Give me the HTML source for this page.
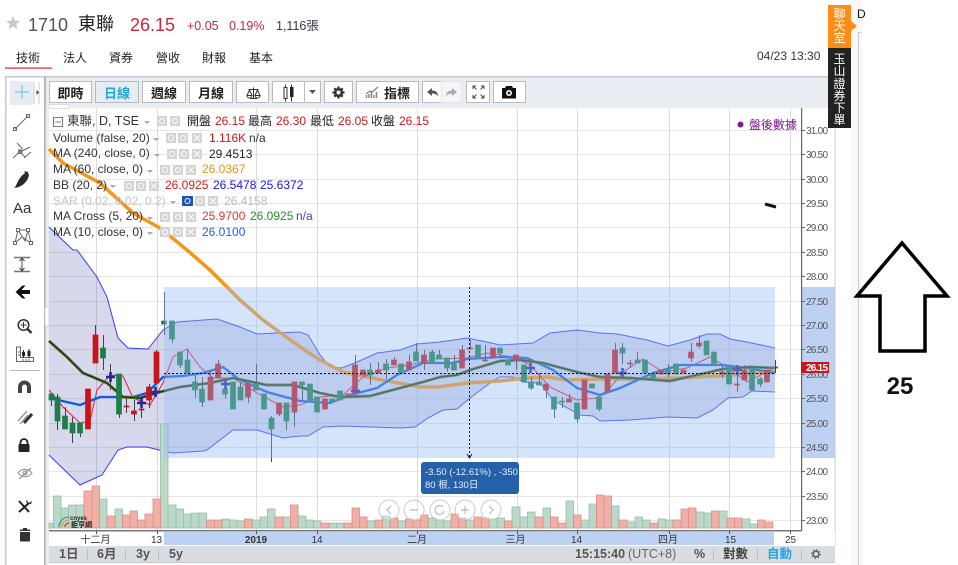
<!DOCTYPE html>
<html><head><meta charset="utf-8"><style>
html,body{margin:0;padding:0;background:#fff;width:958px;height:565px;overflow:hidden}
svg{display:block;font-family:"Liberation Sans","Noto Sans CJK TC",sans-serif}
.b{font-weight:700;font-size:13px;fill:#222;text-anchor:middle}
.tb{fill:#fff;stroke:#b8bcc0;stroke-width:1}
.ax{font-size:10px;fill:#555}
.lg{font-size:12px;fill:#333}
.d{font-size:10px;fill:#333;text-anchor:middle}
.sq{fill:#d4d4d4}
</style></head><body>
<svg width="958" height="565" viewBox="0 0 958 565">
<rect width="958" height="565" fill="#fff"/>
<!-- header -->
<path d="M13 16l2 4.600 5 .4-3.800 3.300 1.200 4.900-4.400-2.700-4.400 2.700 1.200-4.900L6 21l5-.4z" fill="#c9c9c9"/>
<text x="28" y="31" font-size="18" fill="#4a5260">1710</text>
<text x="78" y="30" font-size="18" fill="#222">東聯</text>
<text x="130" y="31" font-size="18" fill="#c8283c">26.15</text>
<text x="187" y="30" font-size="12.500" fill="#c8283c">+0.05</text>
<text x="229" y="30" font-size="12.500" fill="#c8283c">0.19%</text>
<text x="276" y="30" font-size="12.500" fill="#333a4a">1,116張</text>
<g font-size="12" fill="#222">
<text x="16" y="62">技術</text><text x="63" y="62">法人</text><text x="109" y="62">資券</text><text x="156" y="62">營收</text><text x="202" y="62">財報</text><text x="249" y="62">基本</text></g>
<rect x="5" y="67.500" width="47" height="1.200" fill="#d8202c"/>
<text x="757" y="60" font-size="12" fill="#334">04/23 13:30</text>

<!-- toolbar -->
<rect x="5" y="76" width="830" height="32" fill="#e9ecf0"/>
<rect x="5" y="76" width="830" height="1.500" fill="#c6cad0"/>
<rect x="5" y="76" width="1.500" height="489" fill="#c6cad0"/>
<rect x="6.500" y="77" width="38" height="488" fill="#fff"/>
<rect x="44" y="76" width="1.800" height="489" fill="#aeb3b8"/>
<rect x="45.800" y="108" width="3.200" height="457" fill="#e9ecf0"/>
<rect x="6.500" y="76" width="38" height="1.500" fill="#c6cad0"/>
<rect x="10" y="81" width="23" height="24" fill="#e6ecf2"/>
<path d="M22 85v14M15 92h14" stroke="#8ccbe8" stroke-width="1.500"/><path d="M34 82v22M39 82v22" stroke="#bbb" stroke-width=".8"/><path d="M36.500 90l2.500 2.500-2.500 2.500z" fill="#444"/>
<g class="tb">
<rect x="49.500" y="81.500" width="42" height="21"/><rect x="95.500" y="81.500" width="43" height="21" fill="#e6ecf2"/><rect x="142.500" y="81.500" width="43" height="21"/><rect x="189.500" y="81.500" width="43" height="21"/><rect x="236.500" y="81.500" width="32" height="21"/><rect x="272.500" y="81.500" width="32" height="21"/><rect x="304.500" y="81.500" width="16" height="21"/><rect x="324.500" y="81.500" width="28" height="21"/><rect x="356.500" y="81.500" width="62" height="21"/><rect x="422.500" y="81.500" width="19" height="21"/><rect x="441.500" y="81.500" width="20" height="21" fill="#f3f5f8" stroke="#e2e5e9"/><rect x="466.500" y="81.500" width="23" height="21"/><rect x="493.500" y="81.500" width="32" height="21"/>
</g>
<text class="b" x="70.500" y="98">即時</text>
<text class="b" x="117" y="98" style="fill:#22a5dc">日線</text>
<text class="b" x="164" y="98">週線</text>
<text class="b" x="211" y="98">月線</text>
<text class="b" x="397" y="98">指標</text>
<!-- scale -->
<path d="M253.500 87.500v10.500M250 98.500h7M248.500 89.500h10M249.500 90l-2.500 5.500h5zM257.500 90l-2.500 5.500h5zM247 95.500a2.500 2.500 0 0 0 5 0M255 95.500a2.500 2.500 0 0 0 5 0" stroke="#333" fill="none" stroke-width="1"/>
<!-- candles -->
<path d="M285.500 84.500v17M291.500 84.500v17" stroke="#333"/><rect x="284" y="87.500" width="3" height="11" fill="#fff" stroke="#333"/><rect x="290" y="87" width="3.500" height="10" fill="#222"/>
<path d="M309 90h7l-3.500 4z" fill="#555"/>
<!-- gear -->
<circle cx="338.500" cy="92.500" r="4.600" fill="#333"/>
<path d="M338.500 86.500v12M332.500 92.500h12M334.300 88.300l8.400 8.400M342.700 88.300l-8.400 8.400" stroke="#333" stroke-width="2.300"/>
<circle cx="338.500" cy="92.500" r="2" fill="#fff"/>
<!-- indicators -->
<path d="M366.500 98v-3M369 98v-4M371.500 98v-6M374 98v-3M376.500 98v-6" stroke="#888" stroke-width="1.500" fill="none"/>
<path d="M366 94l4-3 2 1 6-5" fill="none" stroke="#666" stroke-width="1"/>
<path d="M427 92l5-4v2.500c4 0 6 2 6 6-1-2-3-3-6-3V96z" fill="#555"/>
<path d="M457 92l-5-4v2.500c-4 0-6 2-6 6 1-2 3-3 6-3V96z" fill="#aaa"/>
<path d="M472.500 85.500h4l-4 4zM484.500 85.500h-4l4 4zM472.500 98.500h4l-4-4zM484.500 98.500h-4l4-4z" fill="#555"/>
<path d="M474.500 87.500l2 2M482.500 87.500l-2 2M474.500 96.500l2-2M482.500 96.500l-2-2" stroke="#555"/>
<path d="M502 88h3l1-2h6l1 2h3v10.500h-14z" fill="#111"/><circle cx="509" cy="93" r="3" fill="#fff"/><circle cx="509" cy="93" r="1.500" fill="#333"/>

<!-- plot grid -->
<rect x="49" y="108" width="786" height="422" fill="#fff"/>
<g stroke="#e6e6e6" stroke-width="1">
<path d="M49 130.500h752M49 154.500h752M49 179.500h752M49 203.500h752M49 227.500h752M49 252.500h752M49 276.500h752M49 301.500h752M49 325.500h752M49 349.500h752M49 374.500h752M49 398.500h752M49 423.500h752M49 447.500h752M49 471.500h752M49 496.500h752M49 520.500h752"/>
<path d="M96.500 108v422M157.500 108v422M256.500 108v422M317.500 108v422M417.500 108v422M517.500 108v422M577.500 108v422M669.500 108v422M729.500 108v422M790.500 108v422" stroke="#dcdcdc"/>
</g>

<!-- BB fill -->
<path fill="#3c3ca0" fill-opacity=".2" d="M49 227L73 250 77 250 97 277 107 297 118 338 128 348 148 349 163 330 177 322 217 319 240 327 257 334 277 333 300 332 308 335 320 355 330 367 342 368 357 362 377 353 400 350 417 344 440 342 467 338 487 342 500 345 533 343 550 333 577 330 600 333 617 334 647 340 668 346 690 340 707 334 720 334 730 339 747 342 775 348 775 392 752 391 743 397 728 398 713 410 697 418 667 417 630 420 600 421 593 416 580 415 553 400 540 383 523 382 513 377 500 377 490 383 470 398 457 409 443 410 428 418 415 427 400 428 343 426 323 427 308 436 300 436 283 438 257 430 233 430 207 450 203 451 173 453 163 451 147 447 127 447 118 450 102 475 80 485 49 455z"/>
<path fill="none" stroke="#3a3af5" stroke-width="1" d="M49 227L73 250 77 250 97 277 107 297 118 338 128 348 148 349 163 330 177 322 217 319 240 327 257 334 277 333 300 332 308 335 320 355 330 367 342 368 357 362 377 353 400 350 417 344 440 342 467 338 487 342 500 345 533 343 550 333 577 330 600 333 617 334 647 340 668 346 690 340 707 334 720 334 730 339 747 342 775 348"/>
<path fill="none" stroke="#3a3af5" stroke-width="1" d="M775 392L752 391 743 397 728 398 713 410 697 418 667 417 630 420 600 421 593 416 580 415 553 400 540 383 523 382 513 377 500 377 490 383 470 398 457 409 443 410 428 418 415 427 400 428 343 426 323 427 308 436 300 436 283 438 257 430 233 430 207 450 203 451 173 453 163 451 147 447 127 447 118 450 102 475 80 485 49 455"/>

<!-- volume -->
<g stroke="#8fc0a6" stroke-width=".8" fill="#bcd8c8">
<path d="M49 523h4v5h-4zM53.500 496h7.500v32h-7.500zM61 508h7.500v20H61zM68.500 505h7.500v23h-7.500zM76 505h8v23h-8zM99 499h8v29h-8zM115 509h7.500v19H115zM160.500 424h7.500v104h-7.500zM168 505h8v23h-8zM176 509h7.500v19H176zM183.500 514h7.500v14h-7.500zM191 513h8v15h-8zM199 513h7.500v15H199zM222 519h7.500v9H222zM229.500 520h7.500v8h-7.500zM237 521h7.500v7H237zM252 520h8v8h-8zM260 517h7.500v11H260zM267.500 509h7.500v19h-7.500zM283 517h7.500v11H283zM298 516h8v12h-8zM306 520h7.500v8H306zM313.500 521h7.500v7h-7.500zM329 523h7.500v5H329zM336.500 523h7.500v5h-7.500zM367 521h8v7h-8zM382 516h8v12h-8zM398 521h7.500v7H398zM428 518h8v10h-8zM436 520h7.500v8H436zM443.500 521h7.500v7h-7.500zM466 520h8v8h-8zM489 519h8v9h-8zM497 518h7.500v10H497zM512 507h8v21h-8zM520 517h7.500v11H520zM527.500 512h7.500v16h-7.500zM543 508h7.500v20H543zM566 501h7.500v27H566zM581 520h8v8h-8zM589 504h7.500v24H589zM611 506h8v22h-8zM627 522h8v6h-8zM635 517h7.500v11H635zM642.500 520h7.500v8h-7.500zM658 519h7.500v9H658zM665.500 520h7.500v8h-7.500zM696 512h8v16h-8zM704 513h7.500v15H704zM719 511h8v17h-8zM742 519h8v9h-8zM750 524h7.500v4H750z"/>
</g>
<g stroke="#e08a80" stroke-width=".8" fill="#efb0a8">
<path d="M84 491h8v37h-8zM92 486h7.500v42H92zM107 516h8v12h-8zM122.500 515h7.500v13h-7.500zM130 511h7.500v17H130zM137.500 520h7.500v8h-7.500zM145 514h8v14h-8zM153 499h7.500v29H153zM206.500 520h8v8h-8zM214.500 520h7.500v8h-7.500zM244.500 519h7.500v9h-7.500zM275 517h8v11h-8zM290.500 505h7.500v23h-7.500zM321 523h8v5h-8zM344 523h8v5h-8zM352 508h7.500v20H352zM359.500 517h7.500v11h-7.500zM375 520h7.500v8H375zM390 518h8v10h-8zM405.500 519h7.500v9h-7.500zM413 520h7.500v8H413zM420.500 515h7.500v13h-7.500zM451 514h7.500v14H451zM458.500 518h7.500v10h-7.500zM474 517h7.500v11H474zM481.500 518h7.500v10h-7.500zM504.500 521h7.500v7h-7.500zM535 517h8v11h-8zM550.500 517h7.500v11h-7.500zM558 523h8v5h-8zM573.500 515h7.500v13h-7.500zM596.500 495h7.500v33h-7.500zM604 496h7.500v32H604zM619 520h8v8h-8zM650 523h8v5h-8zM673 520h8v8h-8zM681 509h7.500v19H681zM688.500 508h7.500v20h-7.500zM711.500 511h7.500v17h-7.500zM727 518h7.500v10H727zM734.500 518h7.500v10h-7.500zM757.500 520h7.500v8h-7.500zM765 522h8v6h-8z"/>
</g>

<!-- MA lines -->
<path fill="none" stroke="#f5951a" stroke-width="3.500" stroke-linejoin="round" d="M49 149L63 163 100 183 133 213 160 228 187 250 210 270 240 300 263 320 300 347 320 360 343 372 377 379 420 387 438 387 467 383 500 381 527 378 547 377 567 380 600 379 630 379 680 378 730 375 775 372"/>
<path fill="none" stroke="#e0203a" stroke-width="1" d="M49 390L63 407 80 423 90 421 97 390 110 375 123 376 133 398 150 405 163 383 173 357 187 349 200 367 213 378 233 378 257 393 283 407 300 405 320 397 343 395 363 377 387 368 410 365 433 359 467 358 487 353 513 357 530 365 550 387 577 400 597 398 610 388 623 372 643 359 663 372 687 368 710 357 727 367 747 382 775 368"/>
<path fill="none" stroke="#0a5ce8" stroke-width="2.300" d="M49 398L80 405 100 397 133 397 147 393 163 377 183 376 203 373 223 367 240 380 267 392 300 401 330 403 350 395 377 388 397 375 423 363 453 363 467 359 500 357 527 358 553 370 577 388 600 395 620 388 653 373 680 365 723 365 747 368 775 373"/>
<path fill="none" stroke="#4f7a2a" stroke-width="2.900" d="M49 341L67 357 83 373 107 383 123 397 140 398 160 392 180 387 210 383 233 378 267 385 293 385 320 393 340 397 370 396 400 388 423 382 440 377 457 375 470 370 500 361 520 360 543 363 577 372 600 377 630 378 670 381 697 375 723 369 750 367 775 368"/>
<path fill="none" stroke="#1a1a1a" stroke-width="1.300" stroke-opacity=".8" d="M49 341L67 357 83 373 107 383 123 397 140 398 160 392 180 387 210 383 233 378 267 385 293 385 320 393 340 397 370 396 400 388 423 382 440 377 457 375 470 370 500 361 520 360 543 363 577 372 600 377 630 378 670 381 697 375 723 369 750 367 775 368"/>

<!-- wicks -->
<path stroke="#444" stroke-width="1" fill="none" d="M51.500 394V406M57.500 394V430M65.500 407V429M72.500 417V443M80.500 423V437M95.500 325V335M103.500 335V370M110.500 364V390M119.500 374V418M126.500 397V413M134.500 400V421M141.500 400V418M149.500 384V408M156.500 350V384M164.500 292V335M172.500 339V343M180.500 365V368M187.500 349V373M195.500 373V398M202.500 377V407M210.500 370V400M218.500 360V378M225.500 394V399M240.500 382V400M248.500 397V403M256.500 364V390M271.500 416V462M279.500 414V416M286.500 421V430M294.500 412V427M302.500 382V400M355.500 355V365M370.500 363V385M378.500 362V373M386.500 359V379M394.500 357V362M409.500 355V365M416.500 343V352M424.500 350V370M432.500 350V360M439.500 350V355M447.500 358V372M454.500 355V364M462.500 345V350M470.500 340V348M485.500 345V361M500.500 353V357M516.500 361V370M531.500 377V390M539.500 373V385M546.500 390V398M554.500 409V418M562.500 397V408M569.500 394V402M577.500 419V423M599.500 409V411M615.500 343V350M622.500 343V364M630.500 360V368M637.500 352V360M653.500 378V380M668.500 364V377M691.500 343V362M699.500 335V348M722.500 365V378M737.500 370V392M744.500 365V370M760.500 377V387M775.500 360V373"/>
<!-- green bodies -->
<path fill="#1c7e48" stroke="#1c7e48" stroke-width=".7" d="M49 394h5v6h-5zM55 397h5v24h-5zM62.500 416h5v13h-5zM70 423h5v10h-5zM77.500 423h5v10h-5zM100.500 348h5v10h-5zM116.500 374h5v40h-5zM161.500 321h5v3h-5zM169.500 321h5v18h-5zM177.500 352h5v13h-5zM185 360h5v13h-5zM192.500 382h5v8h-5zM199.500 389h5v13h-5zM222.500 389h5v5h-5zM230.500 382h5v27h-5zM238 387h5v13h-5zM253.500 384h5v6h-5zM261.500 394h5v15h-5zM269 418h5v11h-5zM284 403h5v18h-5zM299.500 382h5v3h-5zM307.500 384h5v16h-5zM314.500 397h5v15h-5zM329.500 399h5v3h-5zM337.500 391h5v9h-5zM367.500 370h5v5h-5zM383.500 364h5v6h-5zM398.500 364h5v9h-5zM413.500 352h5v9h-5zM429.500 352h5v11h-5zM436.500 355h5v4h-5zM444.500 358h5v10h-5zM451.500 364h5v6h-5zM475.500 345h5v13h-5zM497.500 348h5v5h-5zM505.500 360h5v5h-5zM521.500 365h5v17h-5zM528.500 382h5v6h-5zM536.500 382h5v3h-5zM551.500 397h5v12h-5zM559.500 401h5v1h-5zM574.500 403h5v16h-5zM589.500 384h5v4h-5zM596.500 397h5v12h-5zM620 348h5v5h-5zM635 360h5v3h-5zM642.500 360h5v13h-5zM650.500 374h5v4h-5zM665.500 370h5v4h-5zM673.500 364h5v10h-5zM704 341h5v14h-5zM711.500 352h5v13h-5zM726.500 368h5v16h-5zM749.500 370h5v20h-5zM757.500 379h5v5h-5z"/>
<!-- red bodies -->
<path fill="#c8141a" stroke="#c8141a" stroke-width=".7" d="M85.500 389h5v40h-5zM93 335h5v28h-5zM124 406h5v1h-5zM131.500 411h5v3h-5zM139 409h5v1h-5zM146.500 387h5v13h-5zM154 352h5v31h-5zM208 377h5v23h-5zM215.500 364h5v14h-5zM245.500 384h5v13h-5zM276.500 403h5v11h-5zM292 382h5v30h-5zM322.500 399h5v10h-5zM345.500 394h5v1h-5zM352.500 365h5v29h-5zM360.500 370h5v5h-5zM375.500 370h5v3h-5zM391.500 360h5v5h-5zM406.500 362h5v8h-5zM421.500 355h5v8h-5zM459.500 350h5v18h-5zM467.500 348h5v1h-5zM482.500 360h5v1h-5zM490.500 348h5v10h-5zM513.500 355h5v6h-5zM543.500 384h5v6h-5zM566.500 399h5v3h-5zM582 380h5v29h-5zM605 374h5v18h-5zM612.500 350h5v23h-5zM627.500 363h5v1h-5zM658.500 370h5v4h-5zM681 370h5v3h-5zM688.500 352h5v6h-5zM696.500 343h5v3h-5zM719.500 372h5v2h-5zM734.500 384h5v1h-5zM742 370h5v10h-5zM764.500 370h5v12h-5zM772.500 367h5v1h-5z"/>
<!-- crosses -->
<path stroke="#27279a" stroke-width="2.600" fill="none" d="M106 377h9M110.500 372v10M137 403h9M141.500 398v10M151 392h9M155.500 387v10M221 384h9M225.500 379v10M351 391h9M526 368h9M530.500 363v10M618 373h9M622.500 368v10M733 370h9M737.500 365v10"/>

<!-- drawing band -->
<rect x="164" y="287" width="611" height="171" fill="#94bef5" fill-opacity=".4"/>
<path d="M164 373.500h611" stroke="#111" stroke-dasharray="2 2"/>
<path d="M469.500 287v170" stroke="#222" stroke-dasharray="2 2"/><path d="M467 454l2.500 4 2.500-4" fill="none" stroke="#222"/>
<path d="M765 204l11 3" stroke="#111" stroke-width="3"/>

<!-- tooltip -->
<rect x="421" y="462" width="98" height="32" rx="3" fill="#2560ab"/>
<text x="425" y="475" font-size="9.500" fill="#e6eef8">-3.50 (-12.61%) , -350</text>
<text x="425" y="488" font-size="9.500" fill="#e6eef8">80 根, 130日</text>

<!-- nav circles -->
<g fill="#fff" fill-opacity=".35" stroke="#bbb" stroke-opacity=".8"><circle cx="389" cy="510" r="10"/><circle cx="414" cy="510" r="10"/><circle cx="440" cy="510" r="10"/><circle cx="465" cy="510" r="10"/><circle cx="491" cy="510" r="10"/></g>
<g fill="none" stroke="#bbb" stroke-width="1.200"><path d="M391 506l-4 4 4 4M410 510h8M443 507a4.500 4.500 0 1 0 1 4M461 510h8M465 506v8M489 506l4 4-4 4"/></g>

<!-- logo -->
<g fill="none" stroke-width="1.300"><path d="M59 527a10 10 0 0 1 10-10" stroke="#1f9ac8"/><path d="M62 527a7 7 0 0 1 7-7" stroke="#e8a020"/><path d="M65 527a4 4 0 0 1 4-4" stroke="#d83020"/></g>
<text x="70" y="520" font-size="6" font-weight="700" fill="#222">cnyes</text>
<text x="71" y="527" font-size="7" font-weight="700" fill="#222">鉅亨網</text>

<!-- axis -->
<rect x="802" y="108" width="33" height="422" fill="#fff"/>
<rect x="802" y="287" width="33" height="171" fill="#bdd2f2"/>
<rect x="49" y="530" width="752" height="1.500" fill="#777"/>
<rect x="801" y="108" width="1.200" height="423" fill="#666"/>
<rect x="834.500" y="108" width="1" height="438" fill="#c8ccd2"/>
<path d="M802 130.500h3M802 154.500h3M802 179.500h3M802 203.500h3M802 227.500h3M802 252.500h3M802 276.500h3M802 301.500h3M802 325.500h3M802 349.500h3M802 374.500h3M802 398.500h3M802 423.500h3M802 447.500h3M802 471.500h3M802 496.500h3M802 520.500h3" stroke="#666"/>
<g class="ax">
<text x="806" y="134" textLength="22">31.00</text><text x="806" y="158" textLength="22">30.50</text><text x="806" y="183" textLength="22">30.00</text><text x="806" y="207" textLength="22">29.50</text><text x="806" y="231" textLength="22">29.00</text><text x="806" y="256" textLength="22">28.50</text><text x="806" y="280" textLength="22">28.00</text><text x="806" y="305" textLength="22">27.50</text><text x="806" y="329" textLength="22">27.00</text><text x="806" y="353" textLength="22">26.50</text><text x="806" y="378" textLength="22">26.00</text><text x="806" y="402" textLength="22">25.50</text><text x="806" y="427" textLength="22">25.00</text><text x="806" y="451" textLength="22">24.50</text><text x="806" y="475" textLength="22">24.00</text><text x="806" y="500" textLength="22">23.50</text><text x="806" y="524" textLength="22">23.00</text>
</g>
<rect x="801" y="362" width="28" height="11" fill="#c9181e"/>
<text x="806" y="371" font-size="10" font-weight="700" fill="#fff" textLength="22">26.15</text>

<!-- date axis -->
<rect x="49" y="531.500" width="786" height="14" fill="#fff"/>
<rect x="164" y="532" width="610" height="13" fill="#bdd2f2"/>
<path d="M96.500 531v3M157.500 531v3M256.500 531v3M317.500 531v3M417.500 531v3M517.500 531v3M577.500 531v3M669.500 531v3M729.500 531v3M790.500 531v3" stroke="#555"/>
<g class="d">
<text x="95.500" y="543">十二月</text><text x="156.500" y="543">13</text><text x="256" y="543" font-weight="700">2019</text><text x="317" y="543">14</text><text x="417" y="543">二月</text><text x="515.500" y="543">三月</text><text x="576.500" y="543">14</text><text x="668" y="543">四月</text><text x="730.500" y="543">15</text><text x="790.500" y="543">25</text>
</g>

<!-- bottom bar -->
<rect x="49" y="546" width="786" height="16" fill="#d9dde1"/>
<rect x="49" y="562" width="786" height="1" fill="#c4c8cc"/>
<g font-size="12.500" font-weight="700" fill="#555">
<text x="59" y="558">1日</text><text x="97" y="558">6月</text><text x="136" y="558">3y</text><text x="169" y="558">5y</text>
<text x="575" y="558">15:15:40</text><text x="694" y="558">%</text><text x="723" y="558" fill="#444">對數</text><text x="767" y="558" fill="#22a5dc">自動</text></g>
<text x="628" y="558" font-size="12.500" fill="#666">(UTC+8)</text>
<path d="M87.500 549v10M125.500 549v10M158.500 549v10M713.500 549v10M757.500 549v10M801.500 549v10" stroke="#b8bcc0"/>
<circle cx="816" cy="554" r="2.800" fill="none" stroke="#555" stroke-width="1.300"/><circle cx="816" cy="554" r="4.200" fill="none" stroke="#555" stroke-width="1.200" stroke-dasharray="1.500 1.800"/>

<!-- left handles -->
<rect x="45" y="307" width="4" height="19" fill="#fff" stroke="#ccc" stroke-width=".6"/>
<rect x="49.500" y="104.500" width="19" height="4" fill="#fff" stroke="#ccc" stroke-width=".6"/>

<!-- legend -->
<g class="lg">
<path d="M53.500 117.500h9v9h-9zM55 122h6" fill="none" stroke="#555" stroke-width=".8"/>
<text x="67" y="125" font-size="12.500">東聯, D, TSE</text>
<text x="187" y="125" fill="#222">開盤</text><text x="215" y="125" fill="#d01818">26.15</text><text x="248" y="125" fill="#222">最高</text><text x="276" y="125" fill="#d01818">26.30</text><text x="310" y="125" fill="#222">最低</text><text x="338" y="125" fill="#d01818">26.05</text><text x="371" y="125" fill="#222">收盤</text><text x="399" y="125" fill="#d01818">26.15</text>
<text x="53" y="142">Volume (false, 20)</text><text x="209" y="142" fill="#d01818">1.116K</text><text x="249" y="142">n/a</text>
<text x="53" y="157">MA (240, close, 0)</text><text x="209" y="158" fill="#222">29.4513</text>
<text x="53" y="173">MA (60, close, 0)</text><text x="202" y="173" fill="#f0900c">26.0367</text>
<text x="53" y="189">BB (20, 2)</text><text x="165" y="189" fill="#e01818">26.0925</text><text x="213" y="189" fill="#1414e8">26.5478</text><text x="260" y="189" fill="#1414e8">25.6372</text>
<text x="53" y="205" fill="#c4c4c4">SAR (0.02, 0.02, 0.2)</text><text x="224" y="205" fill="#bbb">26.4158</text>
<text x="53" y="220">MA Cross (5, 20)</text><text x="202" y="220" fill="#f03030">25.9700</text><text x="250" y="220" fill="#2a8a2a">26.0925</text><text x="296" y="220" fill="#4444a8">n/a</text>
<text x="53" y="236">MA (10, close, 0)</text><text x="202" y="236" fill="#2060e0">26.0100</text>
</g>
<g fill="#aaa"><path d="M144 121h6l-3 3zM153 138h6l-3 3zM154 154h6l-3 3zM147 170h6l-3 3zM110 185h6l-3 3zM170 201h6l-3 3zM147 217h6l-3 3zM147 232h6l-3 3z"/></g>
<g class="sq">
<rect x="157" y="116" width="10" height="10"/><rect x="170" y="116" width="10" height="10"/>
<rect x="166" y="133" width="10" height="10"/><rect x="178" y="133" width="10" height="10"/><rect x="192" y="133" width="10" height="10"/>
<rect x="167" y="149" width="10" height="10"/><rect x="179" y="149" width="10" height="10"/><rect x="192" y="149" width="10" height="10"/>
<rect x="160" y="165" width="10" height="10"/><rect x="173" y="165" width="10" height="10"/><rect x="186" y="165" width="10" height="10"/>
<rect x="124" y="181" width="10" height="10"/><rect x="136" y="181" width="10" height="10"/><rect x="149" y="181" width="10" height="10"/>
<rect x="182" y="196" width="11" height="10" style="fill:#1f50c0"/><rect x="195" y="196" width="10" height="10"/><rect x="208" y="196" width="10" height="10"/>
<rect x="160" y="212" width="10" height="10"/><rect x="173" y="212" width="10" height="10"/><rect x="186" y="212" width="10" height="10"/>
<rect x="160" y="227" width="10" height="10"/><rect x="173" y="227" width="10" height="10"/><rect x="186" y="227" width="10" height="10"/>
</g>
<g fill="none" stroke="#fff" stroke-width="1">
<circle cx="162" cy="121" r="2.500"/><circle cx="175" cy="121" r="2.500"/><circle cx="171" cy="138" r="2.500"/><circle cx="183" cy="138" r="2.500"/><circle cx="172" cy="154" r="2.500"/><circle cx="184" cy="154" r="2.500"/><circle cx="165" cy="170" r="2.500"/><circle cx="178" cy="170" r="2.500"/><circle cx="129" cy="186" r="2.500"/><circle cx="141" cy="186" r="2.500"/><circle cx="187.500" cy="201" r="2.500"/><circle cx="200" cy="201" r="2.500"/><circle cx="165" cy="217" r="2.500"/><circle cx="178" cy="217" r="2.500"/><circle cx="165" cy="232" r="2.500"/><circle cx="178" cy="232" r="2.500"/>
<path d="M194 135l6 6M200 135l-6 6M194 151l6 6M200 151l-6 6M188 167l6 6M194 167l-6 6M151 183l6 6M157 183l-6 6M210 198l6 6M216 198l-6 6M188 214l6 6M194 214l-6 6M188 229l6 6M194 229l-6 6"/>
</g>
<circle cx="740.500" cy="124.500" r="3" fill="#7c1a8c"/>
<text x="749" y="129" font-size="12" fill="#7c1a8c">盤後數據</text>

<!-- left tools -->
<g fill="none" stroke="#666" stroke-width="1">
<path d="M15 129l13-13"/><rect x="13.500" y="127.500" width="3" height="3"/><rect x="26.500" y="114.500" width="3" height="3"/>
<path d="M13 158l7-6.500M17 143l5.500 6M20 152l10-5M24 158l7-6M20 152l5 5"/><rect x="18.500" y="150" width="3.500" height="3.500" fill="#888"/>
<path d="M15 243l3-13 7 11 3-11 3 13-9-6zM18 230l10 0"/>
<rect x="13.500" y="241.500" width="3" height="3" fill="#fff"/><rect x="16.500" y="228.500" width="3" height="3" fill="#fff"/><rect x="26.500" y="228.500" width="3" height="3" fill="#fff"/><rect x="29.500" y="241.500" width="3" height="3" fill="#fff"/>
<path d="M14 257.500h16M14 271.500h16" stroke="#777" stroke-width="1.500"/><path d="M22 258v13M19.500 261l2.500-3 2.500 3M19.500 268l2.500 3 2.500-3" stroke="#444"/>
<path d="M16.500 347v14.500h17v-4h-13v-10.500z" stroke="#666"/>
<path d="M18 352h2M18 355h2M23 361v-2M26 361v-2M29 361v-2" stroke="#666"/>
<path d="M18 473c4-5 10-5 14 0-4 5-10 5-14 0z" stroke="#888"/><circle cx="25" cy="473" r="2" stroke="#888"/><path d="M19 479l12-11" stroke="#888"/>
</g>
<path d="M14 188c2-1 3-6 6-10 2-3 4-4 5-5l-1-2 3 1 1-1 0 2 1 2c-1 5-5 12-15 13z" fill="#2a2a2a"/>
<text x="13" y="213" font-size="15" fill="#333">Aa</text>
<path d="M15.500 292l7-6.500h3l-4 4.500h8.500v4h-8.500l4 4.500h-3z" fill="#111"/>
<circle cx="23.500" cy="325" r="5.300" fill="none" stroke="#333" stroke-width="1.500"/><path d="M27.500 329l4 4" stroke="#333" stroke-width="2.400"/><path d="M20.500 325h6M23.500 322v6" stroke="#333"/>
<path d="M29 349v9M23.500 350v8" stroke="#222"/><rect x="27.500" y="351" width="3" height="5" fill="#222"/><rect x="22" y="352" width="3" height="4" fill="#222"/>
<rect x="10" y="370" width="30" height="1" fill="#bbb"/>
<path d="M18 393v-6a6.500 6.500 0 0 1 13 0v6h-4v-6a2.500 2.500 0 0 0-5 0v6z" fill="#444"/>
<path d="M18 421l9-10M20 424l8-9" stroke="#888" stroke-width="1.300" fill="none"/><path d="M24 423l8-9" stroke="#333" stroke-width="3" fill="none"/>
<path d="M20.500 445v-2.500a3.500 3.500 0 0 1 7 0v2.500" fill="none" stroke="#222" stroke-width="1.800"/><rect x="18.500" y="444" width="11" height="8" rx="1" fill="#222"/>
<path d="M19 501l10 11" stroke="#222" stroke-width="2"/><path d="M29 503l-10 9" stroke="#222" stroke-width="2"/><path d="M26.500 500.500l1 2.500 3 .5 1-2" stroke="#222" fill="none" stroke-width="1.200"/>
<rect x="20" y="532" width="10" height="9.500" fill="#333"/><rect x="20" y="529.500" width="10" height="1.500" fill="#333"/><rect x="23" y="528" width="4" height="1.500" fill="#333"/>

<!-- right side tabs -->
<rect x="851" y="0" width="11" height="565" fill="#f8f8f8"/>
<text x="857" y="18" font-size="12" fill="#111">D</text>
<path d="M858.500 33v532" stroke="#ccc" fill="none"/><path d="M858 32.500h4" stroke="#ccc"/>
<rect x="828" y="5" width="23" height="43" fill="#ff8c14"/>
<path d="M851 21l6 5-6 5z" fill="#ff8c14"/>
<rect x="828" y="48" width="23" height="80" fill="#222"/>
<g font-size="12" fill="#fff" text-anchor="middle">
<text x="839.500" y="18">聊</text><text x="839.500" y="30">天</text><text x="839.500" y="42">室</text>
<text x="839.500" y="63">玉</text><text x="839.500" y="75">山</text><text x="839.500" y="88">證</text><text x="839.500" y="100">券</text><text x="839.500" y="112">下</text><text x="839.500" y="124">單</text>
</g>

<!-- annotation arrow -->
<path d="M902 243L947 296H925V351H880V296H857Z" fill="#fff" stroke="#000" stroke-width="3.500"/>
<text x="900" y="394" font-size="24" font-weight="700" fill="#111" text-anchor="middle" style="font-family:'Liberation Sans',sans-serif">25</text>
</svg>
</body></html>
